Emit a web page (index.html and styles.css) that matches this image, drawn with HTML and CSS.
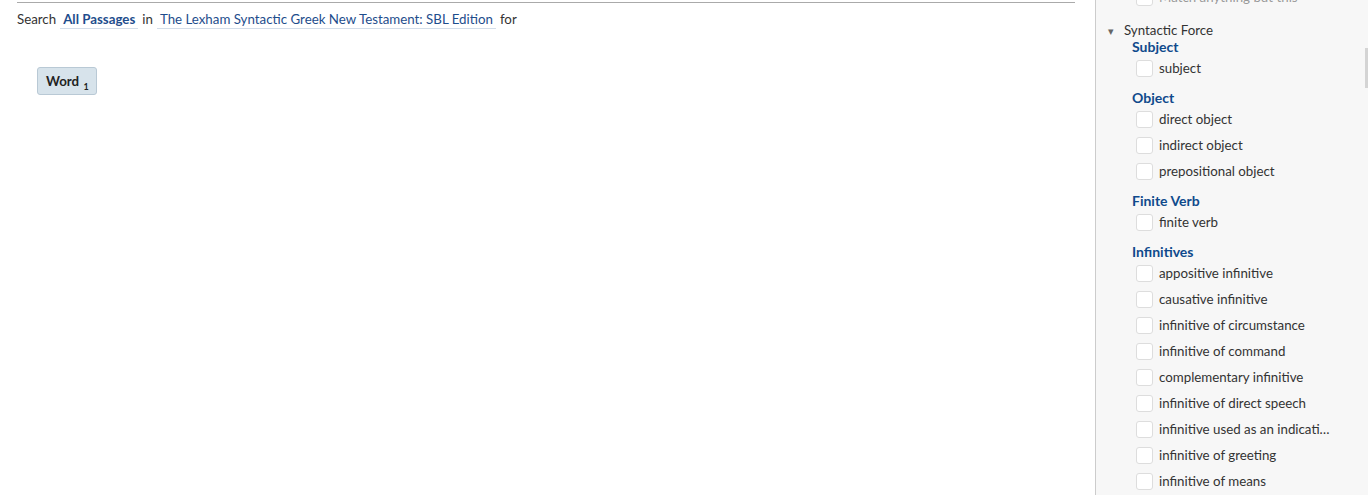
FILE: index.html
```html
<!DOCTYPE html>
<html lang="en">
<head>
  <meta charset="UTF-8" />
  <title>Syntax Search</title>
  <link rel="stylesheet" href="styles.css">
</head>
<body>

  <div class="layout">
    <div class="main">
      <div class="search-line">
        <span>Search</span>
        <a class="pick bold">All Passages</a>
        <span>in</span>
        <a class="pick">The Lexham Syntactic Greek New Testament: SBL Edition</a>
        <span>for</span>
      </div>

      <div class="query">
        <div class="term">Word <sub>1</sub></div>
      </div>
    </div>

    <div class="sidebar">
      <div class="scroll-thumb"></div>

      <div class="option cut">
        <span class="box"></span>Match anything but this
      </div>

      <div class="section-title"><span class="caret">&#9662;</span>Syntactic Force</div>

      <div class="group">
        <div class="group-title">Subject</div>
        <div class="option"><span class="box"></span>subject</div>
      </div>

      <div class="group">
        <div class="group-title">Object</div>
        <div class="option"><span class="box"></span>direct object</div>
        <div class="option"><span class="box"></span>indirect object</div>
        <div class="option"><span class="box"></span>prepositional object</div>
      </div>

      <div class="group">
        <div class="group-title">Finite Verb</div>
        <div class="option"><span class="box"></span>finite verb</div>
      </div>

      <div class="group">
        <div class="group-title">Infinitives</div>
        <div class="option"><span class="box"></span>appositive infinitive</div>
        <div class="option"><span class="box"></span>causative infinitive</div>
        <div class="option"><span class="box"></span>infinitive of circumstance</div>
        <div class="option"><span class="box"></span>infinitive of command</div>
        <div class="option"><span class="box"></span>complementary infinitive</div>
        <div class="option"><span class="box"></span>infinitive of direct speech</div>
        <div class="option"><span class="box"></span><span class="clip">infinitive used as an indicative</span></div>
        <div class="option"><span class="box"></span>infinitive of greeting</div>
        <div class="option"><span class="box"></span>infinitive of means</div>
      </div>
    </div>
  </div>

</body>
</html>
```

FILE: styles.css
```css
html, body {
  margin: 0;
  height: 100%;
  overflow: hidden;
}
body {
  background-color: #ffffff;
  color: #333333;
  font-family: Lato, "Open Sans", sans-serif;
  font-size: 13.3px;
}
.layout {
  display: flex;
  height: 100%;
}
.main {
  flex: 1;
  padding: 0 20px 0 17px;
}
.search-line {
  border-top: 1px solid #aaaaaa;
  margin-top: 2px;
  padding-top: 8px;
  display: flex;
  gap: 4px;
  line-height: 16px;
}
.pick {
  color: #1e4d8c;
  border-bottom: 1px solid #d3dde9;
  padding: 0 3px 1px;
  cursor: pointer;
}
.bold {
  font-weight: bold;
}
.query {
  padding: 38px 0 0 20px;
}
.term {
  display: inline-block;
  background-color: #d7e3eb;
  border: 1px solid #b9c9d5;
  border-radius: 3px;
  padding: 6px 7px 5px 8px;
  font-weight: bold;
  color: #222222;
  line-height: 15px;
}
.term sub {
  font-size: 9px;
  line-height: 0;
  margin-left: 1px;
}
.sidebar {
  position: relative;
  box-sizing: border-box;
  width: 273px;
  background-color: #f7f7f7;
  border-left: 1px solid #cccccc;
  padding: 0 0 0 12px;
}
.scroll-thumb {
  position: absolute;
  right: 0;
  top: 48px;
  width: 3px;
  height: 40px;
  background-color: #d4d4d4;
}
.section-title {
  margin-top: 12px;
  line-height: 16px;
  color: #333333;
}
.caret {
  display: inline-block;
  width: 16px;
  font-size: 11px;
  color: #666666;
}
.group {
  padding-left: 24px;
  margin-bottom: 9px;
}
.group-title {
  color: #0f4a8c;
  font-weight: bold;
  font-size: 14px;
  line-height: 16px;
}
.option {
  display: flex;
  align-items: center;
  height: 26px;
  padding-left: 4px;
}
.cut {
  margin-top: -16px;
  padding-left: 28px;
  color: #999999;
}
.box {
  width: 15px;
  height: 15px;
  background-color: #ffffff;
  border: 1px solid #dddddd;
  border-radius: 3px;
  margin-right: 6px;
  flex-shrink: 0;
}
.clip {
  display: inline-block;
  max-width: 173px;
  white-space: nowrap;
  overflow: hidden;
  text-overflow: ellipsis;
}
```
